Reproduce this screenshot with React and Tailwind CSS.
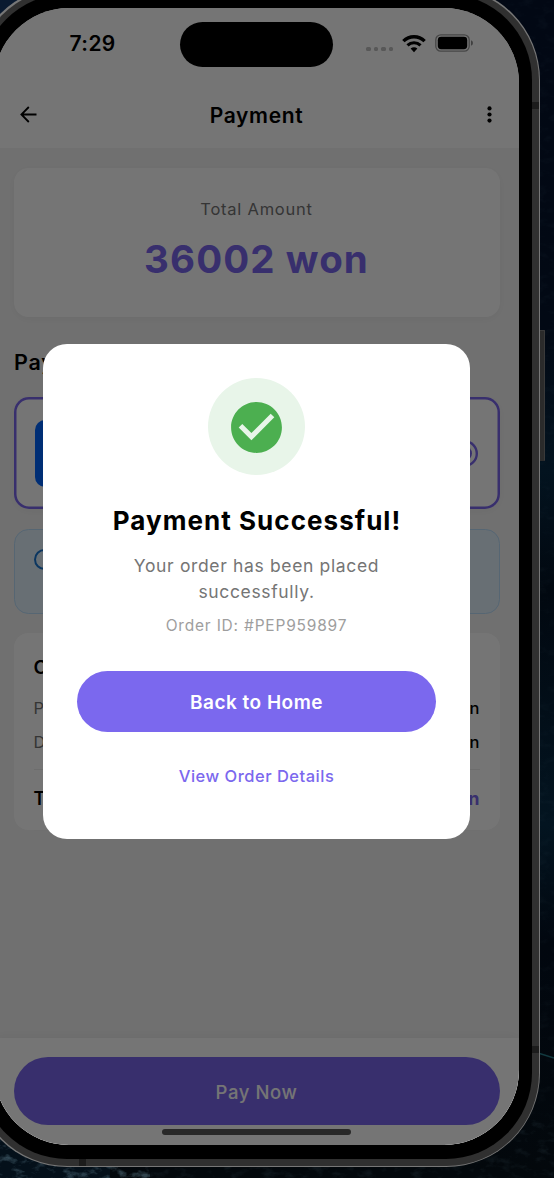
import React from "react";

function Wallpaper() {
  return (
    <svg className="absolute inset-0" width="554" height="1178" aria-hidden="true">
      <defs>
        <linearGradient id="sea" x1="0" y1="0" x2="0" y2="1">
          <stop offset="0" stopColor="#020814" />
          <stop offset="0.28" stopColor="#020914" />
          <stop offset="0.4" stopColor="#03131f" />
          <stop offset="0.5" stopColor="#010810" />
          <stop offset="0.7" stopColor="#031420" />
          <stop offset="0.8" stopColor="#01070f" />
          <stop offset="1" stopColor="#03080c" />
        </linearGradient>
        <filter id="foam" x="0" y="0" width="100%" height="100%">
          <feTurbulence type="fractalNoise" baseFrequency="0.08 0.14" numOctaves="4" seed="7" />
          <feColorMatrix values="0 0 0 0 0.14  0 0 0 0 0.26  0 0 0 0 0.33  0 3 0 0 -1.5" />
        </filter>
      </defs>
      <rect width="554" height="1178" fill="url(#sea)" />
      <rect x="0" y="0" width="40" height="40" fill="#0a1a30" />
      <rect x="0" y="1120" width="110" height="58" fill="#04101a" />
      <rect y="1120" width="150" height="58" filter="url(#foam)" opacity="0.45" />
      <rect x="150" y="1120" width="404" height="58" filter="url(#foam)" opacity="0.1" />
      <rect x="480" width="74" height="1120" filter="url(#foam)" opacity="0.04" />
      <path d="M538 1053 L554 1058" stroke="#12393f" strokeWidth="1.5" />
    </svg>
  );
}

function StatusBar() {
  return (
    <div className="flex h-[71px] items-center justify-between pt-[1px] pr-[45px] pl-[75.5px]">
      <span className="w-[80px] text-[21px] font-semibold tracking-[0.4px] text-black">7:29</span>
      <div className="flex items-center">
        <div className="mt-[10px] mr-[9px] flex gap-[3px]">
          <i className="size-[4.5px] rounded-[1.5px] bg-black/25" />
          <i className="size-[4.5px] rounded-[1.5px] bg-black/25" />
          <i className="size-[4.5px] rounded-[1.5px] bg-black/25" />
          <i className="size-[4.5px] rounded-[1.5px] bg-black/25" />
        </div>
        <svg className="-mt-px mr-[9px]" width="24" height="18" viewBox="0 0 24 18" fill="none" stroke="#000">
          <path d="M1.4 6.1A15 15 0 0 1 22.6 6.1" strokeWidth="3.4" />
          <path d="M5.5 10.4A9.3 9.3 0 0 1 18.5 10.4" strokeWidth="3.1" />
          <path d="M12 17.2L8.6 13.6Q12 10.8 15.4 13.6Z" fill="#000" stroke="none" />
        </svg>
        <svg className="-mt-[2px]" width="39" height="18" viewBox="0 0 39 18">
          <rect x="0.8" y="0.8" width="33.4" height="16.4" rx="5" fill="none" stroke="#000" strokeOpacity="0.4" strokeWidth="1.3" />
          <rect x="2.8" y="2.8" width="29.4" height="12.4" rx="3.4" fill="#000" />
          <path d="M36 6.2Q38 7 38 9T36 11.8Z" fill="#000" fillOpacity="0.45" />
        </svg>
      </div>
    </div>
  );
}

function Header() {
  return (
    <div className="grid h-[69px] grid-cols-[60px_1fr_60px] items-center pr-[26px] pl-[26px]">
      <svg className="mt-px" width="17" height="17" viewBox="0 0 17 17" fill="none" stroke="#000" strokeWidth="1.8">
        <path d="M16.5 8.5H1.6M8.8 1L1.4 8.5L8.8 16" />
      </svg>
      <h1 className="pt-[4px] text-center text-[21px] font-semibold tracking-[0.65px] text-black">Payment</h1>
      <svg className="mt-px justify-self-end" width="7" height="17" viewBox="0 0 7 17">
        <circle cx="3.5" cy="2.4" r="2.1" />
        <circle cx="3.5" cy="8.5" r="2.1" />
        <circle cx="3.5" cy="14.6" r="2.1" />
      </svg>
    </div>
  );
}

function SummaryRow({ label, value }) {
  return (
    <div className="flex justify-between text-[16.5px] leading-[24px]">
      <span className="text-[#757575]">{label}</span>
      <span className="font-medium text-black">{value}</span>
    </div>
  );
}

function PaymentScreen() {
  return (
    <div className="flex h-full flex-col bg-white">
      <StatusBar />
      <Header />
      <main className="flex flex-1 flex-col bg-[#f5f5f5] px-[19.5px] pt-[20px]">
        <section className="flex h-[149px] flex-col items-center rounded-[14.5px] bg-white pt-[29px] shadow-[0_2px_12px_rgba(0,0,0,0.05)]">
          <p className="text-[16.5px] leading-[25px] tracking-[0.75px] text-[#757575]">Total Amount</p>
          <p className="mt-[10px] text-[38.5px] leading-[54px] font-bold tracking-[1.1px] text-[#7b68ee]">36002 won</p>
        </section>
        <h2 className="mt-[31px] pl-[0.5px] text-[21.5px] leading-[28px] font-semibold tracking-[0.8px] text-black">Payment Method</h2>
        <section className="mt-[21px] flex h-[112px] items-center justify-between rounded-[15px] bg-white pr-[22px] pl-[21.5px] shadow-[inset_0_0_0_2.5px_#7b68ee,0_2px_12px_rgba(0,0,0,0.05)]">
          <div className="h-[67px] w-[67px] rounded-[10px] bg-[#0064ff]" />
          <div className="flex size-[27px] items-center justify-center rounded-full shadow-[inset_0_0_0_2.4px_#7b68ee]">
            <div className="size-[15px] rounded-full bg-[#7b68ee]" />
          </div>
        </section>
        <section className="mt-[20px] flex h-[85px] items-start rounded-[14.5px] border-[1.2px] border-[#bbdefb] bg-[#e3f2fd] pt-[19px] pl-[19px]">
          <div className="size-[21px] rounded-full border-2 border-[#1976d2]" />
        </section>
        <section className="mt-[19px] h-[197px] rounded-[14.5px] bg-white px-[20px] pt-[22px] shadow-[0_2px_12px_rgba(0,0,0,0.02)]">
          <h3 className="text-[19px] leading-[26px] font-semibold text-black">Order Summary</h3>
          <div className="mt-[15px] flex flex-col gap-[10px]">
            <SummaryRow label="Product Price" value="33002 won" />
            <SummaryRow label="Delivery Fee" value="3000 won" />
          </div>
          <div className="mt-[15px] border-t border-[#eeeeee]" />
          <div className="mt-[16px] flex justify-between text-[18px] leading-[25px] font-semibold">
            <span className="text-black">Total</span>
            <span className="font-bold text-[#7b68ee]">36002 won</span>
          </div>
        </section>
      </main>
      <footer className="h-[107px] bg-white px-[19.5px] pt-[19px] shadow-[0_-2px_12px_rgba(0,0,0,0.05)]">
        <button className="flex h-[68px] w-full items-center justify-center rounded-full bg-[#7b68ee] pt-[4px] text-[18.5px] font-medium tracking-[0.6px] text-white">
          Pay Now
        </button>
      </footer>
    </div>
  );
}

function SuccessDialog() {
  return (
    <div className="flex h-[495px] w-[427px] flex-col items-center rounded-[24px] bg-white px-[34px] pt-[34px] text-center">
      <div className="flex size-[97px] shrink-0 items-center justify-center rounded-full bg-[#e8f5e9] pt-px">
        <svg width="61" height="61" viewBox="0 0 24 24" fill="#4caf50">
          <path d="M12 2C6.48 2 2 6.48 2 12s4.48 10 10 10 10-4.48 10-10S17.52 2 12 2zm-2 15l-5-5 1.41-1.41L10 14.17l7.59-7.59L19 8l-9 9z" />
        </svg>
      </div>
      <h2 className="mt-[29px] pl-[1px] text-[26px] leading-[34px] font-bold tracking-[1.05px] whitespace-nowrap text-black">Payment Successful!</h2>
      <p className="mt-[15px] w-[290px] text-[17.5px] leading-[25.5px] tracking-[0.65px] text-[#757575]">
        Your order has been placed successfully.
      </p>
      <p className="mt-[11px] text-[15.5px] leading-[22px] tracking-[0.8px] text-[#9e9e9e]">Order ID: #PEP959897</p>
      <button className="mt-[34px] flex h-[61px] w-full shrink-0 items-center justify-center rounded-full bg-[#7b68ee] pt-[3px] text-[19px] font-semibold tracking-[0.5px] text-white">
        Back to Home
      </button>
      <button className="mt-[31px] text-[16.5px] leading-[26px] font-medium tracking-[0.5px] text-[#7b68ee]">View Order Details</button>
    </div>
  );
}

export default function App() {
  return (
    <div className="relative h-[1178px] w-[554px] overflow-hidden bg-[#020812] font-[Inter,sans-serif]">
      <Wallpaper />
      <div className="absolute top-[330px] left-[539px] h-[131px] w-[6px] rounded-r-[1px] border-t border-r border-[#3a3a3a] bg-[#2b2b2b]" />
      <div className="relative -mt-[14px] -ml-[27px] h-[1181px] w-[567px] rounded-[94px] bg-[#777] p-[1.5px]">
        <div className="relative h-full w-full overflow-hidden rounded-[92.5px] bg-[#303030] p-[6.5px]">
          <div className="absolute top-[114px] right-0 h-[7px] w-[7px] bg-[#1c1c1c]" />
          <div className="absolute right-0 bottom-[113px] h-[7px] w-[7px] bg-[#1c1c1c]" />
          <div className="absolute bottom-0 left-[104px] h-[7px] w-[7px] bg-[#1c1c1c]" />
          <div className="relative h-full w-full rounded-[86px] bg-black p-[13px] pt-[14px] pb-[14px]">
            <div className="relative h-full w-full overflow-hidden rounded-[75px]">
              <PaymentScreen />
              <div className="absolute inset-0 flex items-center justify-center bg-black/54 pt-[30px]">
                <SuccessDialog />
              </div>
              <div className="absolute top-[14px] left-[186px] h-[45px] w-[153px] rounded-full bg-black" />
              <div className="absolute bottom-[10px] left-[168px] h-[6px] w-[189px] rounded-full bg-[#292929]" />
            </div>
          </div>
        </div>
      </div>
    </div>
  );
}
